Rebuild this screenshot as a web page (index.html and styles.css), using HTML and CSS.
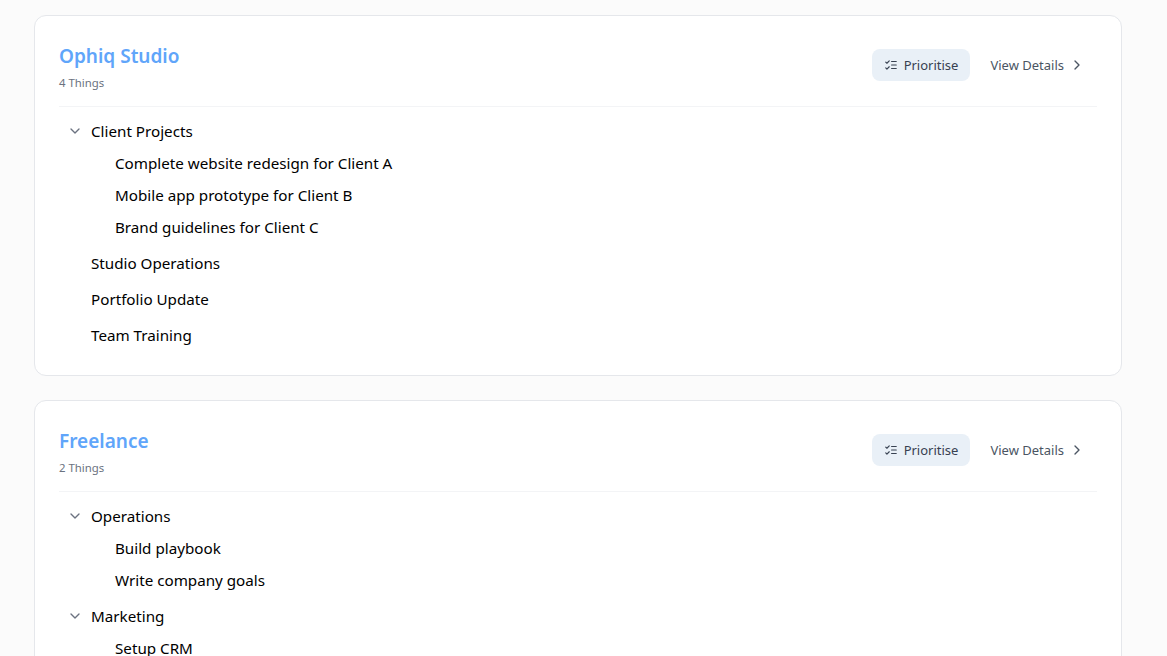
FILE: index.html
```html
<!DOCTYPE html>
<html lang="en">
<head>
<meta charset="utf-8">
<title>Things</title>
<link rel="stylesheet" href="styles.css">
</head>
<body>
<svg class="sprite" width="0" height="0" aria-hidden="true">
  <symbol id="chev-down" viewBox="0 0 24 24"><path d="m6 9 6 6 6-6"/></symbol>
  <symbol id="chev-right" viewBox="0 0 24 24"><path d="m9 18 6-6-6-6"/></symbol>
  <symbol id="list-todo" viewBox="0 0 24 24"><path d="m3 7 2 2 4-4M3 17l2 2 4-4M13 6h8M13 12h8M13 18h8"/></symbol>
</svg>
<main class="page">
  <section class="card">
    <header class="card-head">
      <div>
        <h2 class="card-title">Ophiq Studio</h2>
        <p class="card-count">4 Things</p>
      </div>
      <div class="actions">
        <button class="btn btn-soft"><svg class="icon"><use href="#list-todo"/></svg>Prioritise</button>
        <button class="btn btn-plain">View Details<svg class="icon"><use href="#chev-right"/></svg></button>
      </div>
    </header>
    <ul class="tree">
      <li class="group">
        <div class="row"><svg class="icon toggle"><use href="#chev-down"/></svg>Client Projects</div>
        <ul class="sub">
          <li class="leaf">Complete website redesign for Client A</li>
          <li class="leaf">Mobile app prototype for Client B</li>
          <li class="leaf">Brand guidelines for Client C</li>
        </ul>
      </li>
      <li class="group"><div class="row row-plain">Studio Operations</div></li>
      <li class="group"><div class="row row-plain">Portfolio Update</div></li>
      <li class="group"><div class="row row-plain">Team Training</div></li>
    </ul>
  </section>
  <section class="card">
    <header class="card-head">
      <div>
        <h2 class="card-title">Freelance</h2>
        <p class="card-count">2 Things</p>
      </div>
      <div class="actions">
        <button class="btn btn-soft"><svg class="icon"><use href="#list-todo"/></svg>Prioritise</button>
        <button class="btn btn-plain">View Details<svg class="icon"><use href="#chev-right"/></svg></button>
      </div>
    </header>
    <ul class="tree">
      <li class="group">
        <div class="row"><svg class="icon toggle"><use href="#chev-down"/></svg>Operations</div>
        <ul class="sub">
          <li class="leaf">Build playbook</li>
          <li class="leaf">Write company goals</li>
        </ul>
      </li>
      <li class="group">
        <div class="row"><svg class="icon toggle"><use href="#chev-down"/></svg>Marketing</div>
        <ul class="sub">
          <li class="leaf">Setup CRM</li>
        </ul>
      </li>
    </ul>
  </section>
</main>
</body>
</html>
```
FILE: styles.css
```css
* { box-sizing: border-box; }
html, body { height: 100%; }
body {
  margin: 0;
  overflow: hidden;
  background: #fbfbfb;
  color: #000;
  font-family: "Noto Sans", sans-serif;
}
.sprite { position: absolute; }
.page {
  display: flex;
  flex-direction: column;
  gap: 24px;
  padding: 15px 45px 24px 34px;
}
.card {
  background: #fff;
  border: 1px solid #e5e7eb;
  border-radius: 12px;
  padding: 24px;
}
.card-head {
  display: flex;
  justify-content: space-between;
  align-items: center;
  padding-bottom: 16px;
  border-bottom: 1px solid #f3f4f6;
}
.card-title {
  margin: 0;
  font-size: 19px;
  line-height: 32px;
  font-weight: 600;
  color: #60a5fa;
}
.card-count {
  margin: 4px 0 0;
  font-size: 11.4px;
  line-height: 14px;
  color: #6b7280;
}
.actions { display: flex; align-items: center; gap: 8px; }
.btn {
  display: flex;
  align-items: center;
  gap: 6px;
  height: 32px;
  padding: 0 12px;
  border: 0;
  border-radius: 8px;
  background: transparent;
  font: inherit;
  font-size: 13px;
  color: #4b5563;
}
.btn-soft { background: #e9f0f7; color: #374151; }
.btn-plain { gap: 5px; }
.icon {
  width: 14px;
  height: 14px;
  fill: none;
  stroke: currentColor;
  stroke-width: 2;
  stroke-linecap: round;
  stroke-linejoin: round;
  flex: none;
}
.btn-plain .icon { width: 16px; height: 16px; }
.tree, .sub { list-style: none; margin: 0; padding: 0; }
.tree { padding-top: 8px; }
.row {
  display: flex;
  align-items: center;
  gap: 8px;
  height: 32px;
  padding-left: 8px;
  font-size: 15.2px;
}
.row-plain { padding-left: 32px; }
.group + .group { margin-top: 4px; }
.toggle { width: 16px; height: 16px; color: #6b7280; }
.leaf {
  display: flex;
  align-items: center;
  height: 32px;
  padding-left: 56px;
  font-size: 15.2px;
}
```
